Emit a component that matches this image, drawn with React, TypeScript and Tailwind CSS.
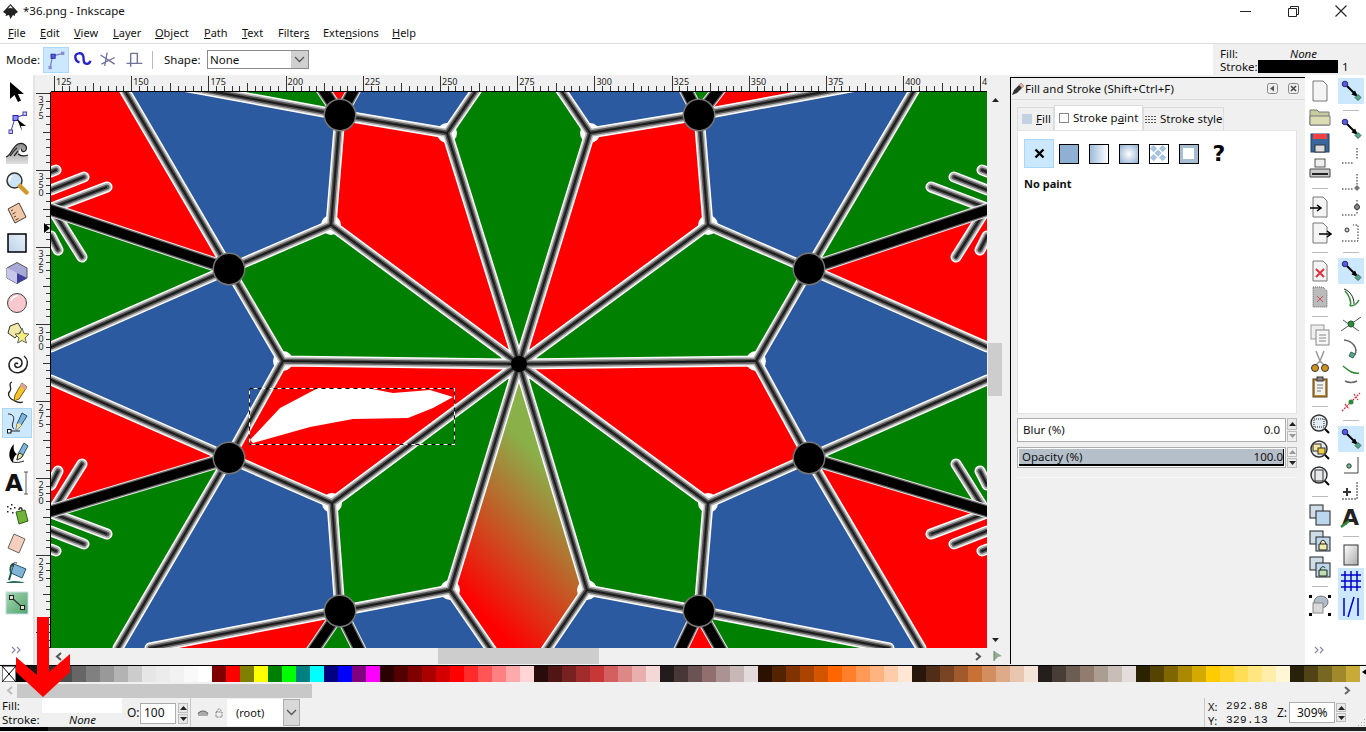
import type { ReactNode } from "react";

const A = "340 115", B = "699 115", C = "229 269", D = "809 269", E = "229 458", F = "809 458", G = "340 611", H = "699 611", O = "519 364";
const P = "331 225", Q = "447 133", R = "590 133", S = "708 225", T = "283 361", U = "756 361", W = "332 503", X = "450 590", Y = "587 590", Z = "708 503";

const RED = "#ff0000", GREEN = "#008000", BLUE = "#2c5aa0";

const regions: [string, string][] = [
  [RED, `51 92 125 92 ${C} 51 210`],
  [BLUE, `125 92 218 92 ${A} ${P} ${C}`],
  [GREEN, `218 92 322 92 ${A}`],
  [RED, `322 92 355 92 ${A}`],
  [BLUE, `355 92 ${A} ${Q} 480 92`],
  [GREEN, `480 92 555 92 ${R} ${O} ${Q}`],
  [BLUE, `555 92 ${R} ${B} 685 92`],
  [GREEN, `685 92 720 92 ${B}`],
  [RED, `720 92 821 92 ${B}`],
  [BLUE, `821 92 915 92 ${D} ${S} ${B}`],
  [GREEN, `915 92 987 92 987 210 ${D}`],
  [RED, `987 210 ${D} 987 347`],
  [BLUE, `987 347 ${D} ${U} ${F} 987 380`],
  [GREEN, `987 380 ${F} 987 515`],
  [RED, `987 515 ${F} 921 648 987 648`],
  [BLUE, `${F} ${Z} ${H} 889 648 921 648`],
  [GREEN, `${H} 889 648 725 648`],
  [RED, `725 648 680 648 ${H}`],
  [BLUE, `680 648 ${H} ${Y} 548 648`],
  [BLUE, `490 648 ${X} ${G} 360 648`],
  [GREEN, `360 648 ${G} 310 648`],
  [RED, `310 648 ${G} 150 648`],
  [BLUE, `118 648 150 648 ${G} ${W} ${E}`],
  [GREEN, `51 515 ${E} 118 648 51 648`],
  [RED, `51 380 ${E} 51 515`],
  [BLUE, `51 347 ${C} ${T} ${E} 51 380`],
  [GREEN, `51 210 ${C} 51 347`],
  [RED, `${A} ${Q} ${O} ${P}`],
  [RED, `${B} ${R} ${O} ${S}`],
  [GREEN, `${P} ${O} ${T} ${C}`],
  [GREEN, `${S} ${O} ${U} ${D}`],
  [RED, `${T} ${O} ${W} ${E}`],
  [RED, `${U} ${O} ${Z} ${F}`],
  [GREEN, `${W} ${O} ${X} ${G}`],
  [GREEN, `${Z} ${O} ${Y} ${H}`],
];

const thin = [
  `M118 79L${C}`, `M150 80L${A}`, `M${A}L${Q}L${O}`, `M${Q}L519 28`, `M${R}L519 28`, `M${B}L${R}L${O}`,
  `M889 80L${B}`, `M921 79L${D}`, `M${A}L${P}L${C}`, `M${P}L${O}`, `M${B}L${S}L${D}`, `M${S}L${O}`,
  `M51 347L${C}L${T}L${E}L51 380`, `M987 347L${D}L${U}L${F}L987 380`, `M${T}L${O}L${U}`,
  `M${E}L${W}L${G}`, `M${W}L${O}`, `M${F}L${Z}L${H}`, `M${Z}L${O}`, `M${G}L${X}L${O}`, `M${H}L${Y}L${O}`,
  `M${X}L519 690`, `M${Y}L519 690`, `M118 648L${E}`, `M150 648L${G}`, `M921 648L${F}`, `M889 648L${H}`,
  "M51 208L107 187", "M51 190L84 177", "M51 172L56 170", "M55 214L82 257", "M51 236L58 250",
  "M987 208L931 187", "M987 190L954 177", "M987 172L982 170", "M983 214L956 257", "M987 236L980 250",
  "M51 513L107 534", "M51 531L84 544", "M51 549L56 551", "M55 507L82 464", "M51 485L58 471",
  "M987 513L931 534", "M987 531L954 544", "M987 549L982 551", "M983 507L956 464", "M987 485L980 471",
].join("");

const thick = `M45 208L${C}M993 208L${D}M45 513L${E}M993 513L${F}M${A}L322 88M${A}L355 88M${B}L685 88M${B}L720 88M${G}L310 655M${G}L362 655M${H}L678 655M${H}L724 655`;

const hubs = [A, B, C, D, E, F, G, H].map((s) => s.split(" ").map(Number));
const joints = [P, Q, R, S, T, U, W, X, Y, Z].map((s) => s.split(" ").map(Number));

function Artwork() {
  return (
    <svg viewBox="51 92 936 556" className="block h-full w-full">
      <defs>
        <linearGradient id="kite" gradientUnits="userSpaceOnUse" x1="472" y1="604" x2="580" y2="500">
          <stop offset="0" stopColor="#ff0000" />
          <stop offset="1" stopColor="#8ab04a" />
        </linearGradient>
      </defs>
      <rect x="51" y="92" width="936" height="556" fill={GREEN} />
      {regions.map(([c, p], i) => (
        <polygon key={i} points={p} fill={c} />
      ))}
      <polygon points={`${O} ${X} 519 690 ${Y}`} fill="url(#kite)" />
      {joints.map(([x, y], i) => (
        <circle key={i} cx={x} cy={y} r="10" fill="#fff" />
      ))}
      <g fill="none" strokeLinecap="round" strokeLinejoin="round">
        <path d={thin} stroke="#fff" strokeWidth="11" />
        <path d={thin} stroke="#b5b5b5" strokeWidth="8" />
        <path d={thin} stroke="#555" strokeWidth="5" />
        <path d={thin} stroke="#1c1c1c" strokeWidth="2" strokeDasharray="3 1" />
        <path d={thick} stroke="#e8e8e8" strokeWidth="14" />
        <path d={thick} stroke="#666" strokeWidth="12" />
        <path d={thick} stroke="#000" strokeWidth="9.500" />
      </g>
      {hubs.map(([x, y], i) => (
        <g key={i}>
          <circle cx={x} cy={y} r="16.500" fill="#777" />
          <circle cx={x} cy={y} r="15" fill="#000" />
        </g>
      ))}
      <circle cx="519" cy="364" r="8" fill="#000" />
      <polygon points="250,440 280,408 318,388 367,388 393,393 430,390 453,397 433,408 408,418 353,419 310,427 253,443" fill="#fff" />
      <rect x="249.500" y="388.500" width="205" height="56" fill="none" stroke="#fff" strokeWidth="1" />
      <rect x="249.500" y="388.500" width="205" height="56" fill="none" stroke="#000" strokeWidth="1" strokeDasharray="4 4" />
    </svg>
  );
}

function TopRuler() {
  const ticks = Array.from({ length: 122 }, (_, i) => i);
  return (
    <svg width="936" height="17" className="block">
      <line x1="0" x2="936" y1="16.500" y2="16.500" stroke="#000" />
      {ticks.map((i) => {
        const x = Math.round(3 + i * 7.72) + 0.5;
        const top = i % 10 === 0 ? 1 : i % 5 === 0 ? 8 : 11;
        return <line key={i} x1={x} x2={x} y1={top} y2="16" stroke="#333" />;
      })}
      {ticks.filter((i) => i % 10 === 0 && i < 120).map((i) => (
        <text key={i} x={5 + i * 7.72} y="10" fontSize="9" fontFamily="'Noto Sans', sans-serif" fill="#222">
          {125 + (i / 10) * 25}
        </text>
      ))}
      <text x="931" y="10" fontSize="9" fontFamily="'Noto Sans', sans-serif" fill="#222">4</text>
    </svg>
  );
}

function LeftRuler() {
  const ticks = Array.from({ length: 73 }, (_, i) => i);
  return (
    <svg width="16" height="556" className="block">
      <line x1="15.500" x2="15.500" y1="0" y2="556" stroke="#000" />
      {ticks.map((i) => {
        const y = Math.round(1 + i * 7.7) + 0.5;
        const left = i % 10 === 0 ? 1 : i % 5 === 0 ? 8 : 11;
        return <line key={i} x1={left} x2="15" y1={y} y2={y} stroke="#333" />;
      })}
      {[0, 1, 2, 3, 4, 5, 6].map((k) => (
        <text key={k} fontSize="9" fontFamily="'Noto Sans', sans-serif" fill="#222" textAnchor="middle">
          {String(375 - k * 25).split("").map((d, j) => (
            <tspan key={j} x="6" y={11 + k * 77 + j * 8}>{d}</tspan>
          ))}
        </text>
      ))}
      <polygon points="9,131 15,136 9,141" fill="#000" />
    </svg>
  );
}

const I = ({ children, s = 24 }: { children: ReactNode; s?: number }) => (
  <svg width={s} height={s} viewBox="0 0 24 24" className="block">{children}</svg>
);

const SnapNodes = () => (
  <I>
    <path d="M6 5L17 16" stroke="#000" strokeWidth="2" />
    <path d="M16 11.500L19 18L12.500 15.500Z" fill="#000" />
    <circle cx="6" cy="5" r="2.800" fill="#5b5bd6" stroke="#2a2a8a" />
    <path d="M19 15.500L22 18.500L19 21.500L16 18.500Z" fill="#5aa58a" stroke="#2b6b55" />
  </I>
);

const toolIcons: ReactNode[] = [
  <I><path d="M5 1V18L9.500 14L13 21L16 19.500L13 13H19Z" fill="#000" /></I>,
  <I>
    <path d="M6 20L10 7L21 3" fill="none" stroke="#3a3ac0" strokeWidth="1" />
    <rect x="8" y="4.500" width="5" height="5" fill="#8b8bff" stroke="#2222aa" />
    <rect x="18" y="1" width="3.500" height="3.500" fill="#ccf" stroke="#4444aa" />
    <rect x="4" y="19" width="3.500" height="3.500" fill="#ccf" stroke="#4444aa" />
    <path d="M12 8L21 15L16 15L17 20Z" fill="#000" />
  </I>,
  <I>
    <defs><linearGradient id="wv" x1="0" y1="0" x2="0" y2="1"><stop offset="0" stopColor="#8a8a8a" /><stop offset="1" stopColor="#e0e0e0" /></linearGradient></defs>
    <path d="M1 23V16C6 15 7 6 13 3C18 1 23 5 21 9C19 12 15 10 17 8C14 8 13 11 15 13C17 15 20 15 23 14V23Z" fill="url(#wv)" />
    <path d="M1 16C6 15 7 6 13 3C18 1 23 5 21 9C19 12 15 10 17 8M5 15C8 12 9 9 12 7M9 15C11 13 12 11 13 10M13 13C16 16 20 15 23 14" fill="none" stroke="#222" strokeWidth="1.200" />
  </I>,
  <I>
    <circle cx="9.500" cy="9.500" r="7.500" fill="#cfe3f7" stroke="#333" strokeWidth="1.500" />
    <path d="M7 5C5 6 4.500 8 5 10" stroke="#fff" fill="none" strokeWidth="1.500" />
    <path d="M15 15L21.500 21.500" stroke="#d09a2a" strokeWidth="4.500" strokeLinecap="round" />
  </I>,
  <I>
    <path d="M3 8L14 2L21 16L10 22Z" fill="#f2c9a8" stroke="#4a3a30" />
    <path d="M6 10L8 8.800M7.500 13L10.500 11.500M9 16L11 15M10.500 19L13.500 17.500" stroke="#4a3a30" strokeWidth="1" />
  </I>,
  <I>
    <defs><linearGradient id="rg" x1="0" y1="1" x2="1" y2="0"><stop offset="0" stopColor="#bcd3ea" /><stop offset="1" stopColor="#e9f0f7" /></linearGradient></defs>
    <rect x="3" y="3" width="18" height="18" fill="url(#rg)" stroke="#000" strokeWidth="1.500" />
  </I>,
  <I>
    <path d="M12 1.500L22 7V17L12 22.500L2 17V7Z" fill="#a9a9d8" stroke="#555" />
    <path d="M12 12L22 17L12 22.500L2 17Z" fill="#3e3e9c" />
    <path d="M2 7L12 12V22.500L2 17Z" fill="#c7c7e8" />
  </I>,
  <I><circle cx="12" cy="12" r="9.500" fill="#f9c8ce" stroke="#444" strokeWidth="1" /><path d="M6 10C7 6 10 5 13 4.500" stroke="#fff" strokeWidth="1.500" fill="none" /></I>,
  <I>
    <path d="M5 5L13 2L17 9L10 17L3 12Z" fill="#f2e9a8" stroke="#333" />
    <path d="M17 7L19 12.500L24 13L20 17L21.500 22L17 19.500L12.500 22L14 17L10 13L15 12.500Z" fill="#f4ee7a" stroke="#666" />
  </I>,
  <I><path d="M13 13C11 11 9 13 10 15C12 18 17 16 17 12C17 7 11 5 7 8C3 11 3 17 7 20C11 23 18 22 21 17C23 13 23 8 19 5" fill="none" stroke="#222" strokeWidth="1.500" /></I>,
  <I>
    <path d="M7 1C2 3 8 7 5 10C2 13 4 17 8 19C11 21 15 22 18 21" fill="none" stroke="#222" strokeWidth="1.300" />
    <path d="M17 2L22 6L14 18L9 20L10 14Z" fill="#f4c430" stroke="#7a5a10" />
    <path d="M17 2L22 6L20 9L15 5Z" fill="#d9a5a0" />
  </I>,
  <I>
    <path d="M3 3C8 3 10 6 8 11C7 14 7 16 9 18" fill="none" stroke="#222" />
    <path d="M6 20H15" stroke="#222" />
    <rect x="2.500" y="18.500" width="3.500" height="3.500" fill="#fff" stroke="#111" />
    <path d="M17 2L22 5L15 16L11 19L12 13Z" fill="#7fb4d8" stroke="#27506e" />
    <path d="M14 12L16.500 14L15 16L11 19L12 13Z" fill="#f2e3a0" />
  </I>,
  <I>
    <path d="M9 3C4 8 2 16 8 22C8 18 9 15 12 13C9 12 8 7 9 3Z" fill="#000" />
    <path d="M19 2L23 5L17 16L12 19L13 13Z" fill="#7fb4d8" stroke="#27506e" />
    <path d="M15 12L18 14L16 17L12 19L13 14Z" fill="#f2e3a0" stroke="#333" />
    <path d="M8 21C12 22 16 21 19 20" stroke="#222" fill="none" />
  </I>,
  <I>
    <text x="0" y="20" fontSize="23" fontWeight="700" fontFamily="'DejaVu Sans', sans-serif" fill="#111">A</text>
    <path d="M19 1H23M19 23H23M21 1V23" stroke="#333" fill="none" strokeWidth="0.800" />
  </I>,
  <I>
    <path d="M11 11L20 9L23 20L14 23Z" fill="#6fb33a" stroke="#2f5f14" />
    <path d="M14 9C14 6 17 6 17 9" fill="none" stroke="#333" strokeWidth="1.500" />
    <path d="M2 5h1.500v1.500H2zM6 3h1.500v1.500H6zM5 7h1.500v1.500H5zM9 6h1.500v1.500H9zM2 10h1.500v1.500H2zM7 11h1.500v1.500H7z" fill="#222" />
  </I>,
  <I><path d="M9 3L20 8L14 22L3 17Z" fill="#f6cfc0" stroke="#665" /></I>,
  <I>
    <path d="M9 3L21 8L17 17L6 12Z" fill="#7fb4d8" stroke="#27506e" />
    <path d="M9 3C5 3 5 9 6 12L4 19" fill="none" stroke="#1f5a4a" strokeWidth="2" />
    <path d="M1 22C6 19 16 20 20 22Z" fill="#2c6d5e" />
    <path d="M12 2C8 1 7 3 8 6" fill="none" stroke="#333" />
  </I>,
  <I>
    <defs><linearGradient id="gr" x1="0" y1="0" x2="1" y2="1"><stop offset="0" stopColor="#a8d8b4" /><stop offset="1" stopColor="#4fa36a" /></linearGradient></defs>
    <rect x="1" y="1" width="22" height="22" fill="url(#gr)" stroke="#cde" />
    <path d="M7 7L17 16" stroke="#333" strokeWidth="1.300" />
    <rect x="4.500" y="4.500" width="4" height="4" fill="#ddd" stroke="#222" />
    <rect x="15.500" y="14.500" width="4" height="4" fill="#ddd" stroke="#222" />
  </I>,
];

const Page = ({ children }: { children?: ReactNode }) => (
  <I s={24}>
    <path d="M5 2H15L19 6V22H5Z" fill="#f4f4f4" stroke="#777" />
    {children}
  </I>
);

const Lens = ({ children }: { children?: ReactNode }) => (
  <I>
    <circle cx="11" cy="10" r="8" fill="#e6eef4" stroke="#333" strokeWidth="1.500" />
    {children}
    <path d="M17 16L21 20" stroke="#000" strokeWidth="2" />
  </I>
);

const Stack = ({ children }: { children?: ReactNode }) => (
  <I>
    <rect x="2" y="2" width="13" height="13" fill="#cfdde8" stroke="#222" />
    <rect x="8" y="8" width="14" height="14" fill="#bcd6ee" stroke="#222" />
    {children}
  </I>
);

const commandIcons: ("sep" | ReactNode)[] = [
  <Page />,
  <I><path d="M2 5H9L11 7H21V20H2Z" fill="#c8cba0" stroke="#777" /><path d="M2 11H22V20H2Z" fill="#dcdcb5" stroke="#777" /></I>,
  <I><rect x="3" y="3" width="18" height="18" fill="#39679c" stroke="#20406a" /><rect x="5" y="3" width="14" height="5" fill="#f04040" /><rect x="7" y="14" width="10" height="7" fill="#ddd" stroke="#333" /></I>,
  <I><rect x="7" y="2" width="10" height="8" fill="#eee" stroke="#555" /><path d="M2 12H22V20H2Z" fill="#ccc" stroke="#444" /><path d="M4 17H20" stroke="#222" strokeWidth="2" /></I>,
  "sep",
  <Page><path d="M2 13H12M9 10L13 13L9 16" stroke="#000" fill="none" strokeWidth="1.500" /></Page>,
  <Page><path d="M11 13H22M19 10L23 13L19 16" stroke="#000" fill="none" strokeWidth="1.500" /></Page>,
  "sep",
  <Page><path d="M8 10L16 18M16 10L8 18" stroke="#e03040" strokeWidth="2" /></Page>,
  <I><path d="M5 2H15L19 6V22H5Z" fill="#bbb" stroke="#666" strokeDasharray="1 1" /><path d="M9 11L15 17M15 11L9 17" stroke="#c9505e" /></I>,
  "sep",
  <I><rect x="3" y="2" width="13" height="14" fill="#eee" stroke="#999" /><rect x="8" y="7" width="13" height="15" fill="#f7f7f7" stroke="#888" /><path d="M11 12H18M11 15H18M11 18H18" stroke="#888" /></I>,
  <I><path d="M8 2L12 12L16 2M12 12L6 18M12 12L18 18" stroke="#999" fill="none" strokeWidth="1.500" /><circle cx="7" cy="19" r="3.500" fill="#d0941e" stroke="#333" /><circle cx="17" cy="19" r="3.500" fill="#d0941e" stroke="#333" /></I>,
  <I><rect x="5" y="4" width="14" height="18" fill="#b88a3c" stroke="#5a3f14" /><rect x="7" y="6" width="10" height="14" fill="#f2f2f2" /><rect x="9" y="2" width="6" height="4" fill="#888" stroke="#333" /><path d="M9 10H15M9 13H15M9 16H13" stroke="#777" /></I>,
  "sep",
  <Lens><rect x="6" y="6" width="10" height="8" fill="none" stroke="#222" strokeDasharray="1 1" /></Lens>,
  <Lens><rect x="5" y="5" width="8" height="7" fill="#f3e6a0" stroke="#333" /><rect x="10" y="9" width="7" height="6" fill="#f0d040" stroke="#333" /></Lens>,
  <Lens><rect x="7" y="5" width="8" height="11" fill="#e8e8e8" stroke="#333" /></Lens>,
  "sep",
  <Stack />,
  <Stack><path d="M11 15H19V21H11ZM12.500 15C12.500 10 17.500 10 17.500 15" fill="#f2e8a8" stroke="#222" /></Stack>,
  <Stack><path d="M11 15H19V21H11ZM12.500 15C12.500 11 16.500 11 17 13" fill="#bde0b0" stroke="#222" /></Stack>,
  "sep",
  <I>
    <ellipse cx="13" cy="9" rx="7" ry="6" fill="#aebdc9" stroke="#777" />
    <rect x="5" y="10" width="10" height="10" fill="#d9d9d9" stroke="#888" />
    <path d="M1 2h3v3h-3zM20 2h3v3h-3zM1 20h3v3h-3zM20 20h3v3h-3z" fill="#000" />
  </I>,
];

const Dots = () => <path d="M3 20H14M18 5V16" stroke="#666" strokeWidth="1.500" strokeDasharray="1.500 1.500" fill="none" />;

const snapIcons: ("sep" | { on?: boolean; icon: ReactNode })[] = [
  { on: true, icon: <SnapNodes /> },
  "sep",
  { icon: <SnapNodes /> },
  { icon: <I><Dots /></I> },
  { icon: <I><Dots /><path d="M18 16L21 19L18 22L15 19Z" fill="#777" /></I> },
  { icon: <I><path d="M3 20H18M18 5V20" stroke="#222" strokeDasharray="1.500 1.500" fill="none" /><circle cx="18" cy="12" r="2.500" fill="#888" stroke="#333" /></I> },
  { icon: <I><path d="M3 20H19V4H14" stroke="#222" strokeDasharray="1.500 1.500" fill="none" /><circle cx="8" cy="9" r="2" fill="#ccc" stroke="#333" /></I> },
  "sep",
  { on: true, icon: <SnapNodes /> },
  { icon: <I><path d="M6 6C10 10 13 17 11 21M20 15C18 19 14 21 11 21" fill="none" stroke="#2f8a3a" strokeWidth="1.500" /><path d="M5 4C11 6 15 12 15 19" fill="none" stroke="#222" /></I> },
  { icon: <I><path d="M2 20L22 6M4 9L20 20" stroke="#555" fill="none" /><circle cx="12" cy="13" r="3" fill="#2f8a3a" stroke="#1a5a28" /></I> },
  { icon: <I><path d="M5 3C14 4 19 11 16 18" fill="none" stroke="#666" strokeWidth="1.500" /><path d="M12 15L16 17L14 21L10 19Z" fill="#5aa58a" stroke="#2b6b55" /></I> },
  { icon: <I><path d="M4 3C10 8 14 11 20 10" fill="none" stroke="#2f8a3a" strokeWidth="1.500" /><path d="M6 18C10 20 14 20 18 18" fill="none" stroke="#666" strokeWidth="1.500" /></I> },
  { icon: <I><path d="M3 22L21 4M6 15L10 20M15 5L19 11" stroke="#d0303a" strokeWidth="1.300" fill="none" strokeDasharray="2 1" /><circle cx="12" cy="13" r="2.500" fill="#2f8a3a" /></I> },
  "sep",
  { on: true, icon: <SnapNodes /> },
  { icon: <I><path d="M19 4V20H5" stroke="#444" fill="none" /><circle cx="10" cy="13" r="2.200" fill="#6cc090" stroke="#333" /></I> },
  { icon: <I><path d="M8 9V17M4 13H12" stroke="#333" strokeWidth="2" /><path d="M18 3V20H3" stroke="#333" strokeDasharray="2 1" fill="none" /></I> },
  { icon: <I><text x="3" y="20" fontSize="22" fontWeight="700" fontFamily="'DejaVu Sans', sans-serif" fill="#222">A</text><path d="M2 22L10 16" stroke="#2f8a3a" strokeWidth="2.500" /></I> },
  "sep",
  { icon: <I><defs><linearGradient id="pg" x1="0" y1="0" x2="1" y2="1"><stop offset="0" stopColor="#fff" /><stop offset="1" stopColor="#aaa" /></linearGradient></defs><rect x="5" y="2" width="14" height="20" fill="url(#pg)" stroke="#333" /></I> },
  { on: true, icon: <I><path d="M6 2V22M12 2V22M18 2V22M2 6H22M2 12H22M2 18H22" stroke="#0000cc" strokeWidth="1.500" /></I> },
  { on: true, icon: <I><path d="M5 3V21M19 3V21M9 22L15 2" stroke="#0000cc" strokeWidth="1.500" /></I> },
];

const Chevrons = () => (
  <svg width="12" height="8" viewBox="0 0 12 8" className="block">
    <path d="M1 1L4 4L1 7M6 1L9 4L6 7" fill="none" stroke="#8a8aa8" strokeWidth="1.200" />
  </svg>
);

const Tri = ({ up, dim }: { up?: boolean; dim?: boolean }) => (
  <svg width="7" height="4" viewBox="0 0 7 4" className="block">
    <path d={up ? "M0 4L3.500 0L7 4Z" : "M0 0L3.500 4L7 0Z"} fill={dim ? "#999" : "#222"} />
  </svg>
);

const Spin = ({ h = "h-[21px]", dimUp, dimDown }: { h?: string; dimUp?: boolean; dimDown?: boolean }) => (
  <div className={`flex w-[10px] flex-col gap-px ${h}`}>
    <div className={`flex flex-1 items-center justify-center border border-[#bdbdbd] ${dimUp ? "bg-[#f0f0f0]" : "bg-[#e8e8e8]"}`}><Tri up dim={dimUp} /></div>
    <div className={`flex flex-1 items-center justify-center border border-[#bdbdbd] ${dimDown ? "bg-[#f0f0f0]" : "bg-[#e8e8e8]"}`}><Tri dim={dimDown} /></div>
  </div>
);

const ChevDown = () => (
  <svg width="11" height="7" viewBox="0 0 11 7"><path d="M1 1L5.500 5.500L10 1" fill="none" stroke="#555" strokeWidth="1.300" /></svg>
);

const menus: [string, string, string, string][] = [
  ["", "F", "ile", "w-[32px]"], ["", "E", "dit", "w-[34px]"], ["", "V", "iew", "w-[39px]"], ["", "L", "ayer", "w-[42px]"], ["", "O", "bject", "w-[49px]"],
  ["", "P", "ath", "w-[38px]"], ["", "T", "ext", "w-[36px]"], ["Filter", "s", "", "w-[45px]"], ["Exte", "n", "sions", "w-[69px]"], ["", "H", "elp", "w-[30px]"],
];

const grays = ["#000000", "#1a1a1a", "#333333", "#4d4d4d", "#666666", "#808080", "#999999", "#b3b3b3", "#cccccc", "#e6e6e6", "#ececec", "#f2f2f2", "#f9f9f9", "#ffffff"];
const swatches = [
  ...grays,
  "#800000", "#ff0000", "#808000", "#ffff00", "#008000", "#00ff00", "#008080", "#00ffff", "#000080", "#0000ff", "#800080", "#ff00ff",
  "#2b0000", "#550000", "#800000", "#aa0000", "#d40000", "#ff0000", "#ff2a2a", "#ff5555", "#ff8080", "#ffaaaa", "#ffd5d5",
  "#280b0b", "#501616", "#782121", "#a02c2c", "#c83737", "#d35f5f", "#de8787", "#e9afaf", "#f4d7d7",
  "#241c1c", "#483737", "#6c5353", "#916f6f", "#ac9393", "#c8b7b7", "#e3dbdb",
  "#2b1100", "#552200", "#803300", "#aa4400", "#d45500", "#ff6600", "#ff7f2a", "#ff9955", "#ffb380", "#ffccaa", "#ffe6d5",
  "#28170b", "#502d16", "#784421", "#a05a2c", "#c87137", "#d38d5f", "#deaa87", "#e9c6af", "#f4e3d7",
  "#241f1c", "#483e37", "#6c5d53", "#917c6f", "#ac9d93", "#c8beb7", "#e3dedb",
  "#2b2200", "#554400", "#806600", "#aa8800", "#d4aa00", "#ffcc00", "#ffd42a", "#ffdd55", "#ffe680", "#ffeeaa", "#fff6d5",
  "#28220b", "#504416", "#786721", "#a0892c", "#c8ab37",
];

function PaintButtons() {
  const sq = "h-[20px] w-[20px] border border-black";
  return (
    <div className="flex pl-[6px] pt-2">
      <div className="flex h-[29px] w-[30px] items-center justify-center border border-[#a8d8fb] bg-[#cce8ff]">
        <svg width="11" height="11" viewBox="0 0 11 11"><path d="M1.500 1.500L9.500 9.500M9.500 1.500L1.500 9.500" stroke="#000" strokeWidth="2.400" /></svg>
      </div>
      <div className="flex h-[29px] w-[30px] items-center justify-center"><div className={`${sq} bg-[#8fb0d3]`} /></div>
      <div className="flex h-[29px] w-[30px] items-center justify-center"><div className={`${sq} bg-gradient-to-r from-[#9dbbdb] to-white`} /></div>
      <div className="flex h-[29px] w-[30px] items-center justify-center"><div className={`${sq} bg-[radial-gradient(circle,#ffffff,#8fb0d3)]`} /></div>
      <div className="flex h-[29px] w-[30px] items-center justify-center">
        <svg width="20" height="20" viewBox="0 0 20 20" className="border border-black bg-white">
          <path d="M4 0L8 4L4 8L0 4ZM14 0L18 4L14 8L10 4ZM9 5L13 9L9 13L5 9ZM4 10L8 14L4 18L0 14ZM14 10L18 14L14 18L10 14Z" fill="#a7c3e0" />
        </svg>
      </div>
      <div className="flex h-[29px] w-[30px] items-center justify-center">
        <div className={`${sq} flex items-center justify-center bg-[#a7bdd4] p-[3px] pb-[4px] pr-[4px]`}><div className="h-full w-full bg-white" /></div>
      </div>
      <div className="flex h-[29px] w-[30px] items-center justify-center font-['DejaVu_Sans'] text-[22px] font-bold leading-none text-black">?</div>
    </div>
  );
}

function DockPanel() {
  return (
    <div className="mt-[2px] flex h-[587px] w-[295px] flex-col border-l border-t border-black text-[11.500px]">
      <div className="flex h-[22px] items-center border-b border-[#dcdcdc] pr-[6px]">
        <svg width="14" height="14" viewBox="0 0 14 14" className="shrink-0"><path d="M1 13L3 8L10 1L13 4L6 11Z" fill="#333" /><path d="M10 1L13 4L11 6L8 3Z" fill="#e0b0a0" /></svg>
        <span>Fill and Stroke (Shift+Ctrl+F)</span>
        <svg width="11" height="11" viewBox="0 0 11 11" className="ml-auto"><rect x="0.500" y="0.500" width="10" height="10" rx="2" fill="#eee" stroke="#888" /><path d="M7 2.500V8.500L3 5.500Z" fill="#555" /></svg>
        <svg width="11" height="11" viewBox="0 0 11 11" className="ml-[10px]"><rect x="0.500" y="0.500" width="10" height="10" rx="2" fill="#eee" stroke="#888" /><path d="M3 3L8 8M8 3L3 8" stroke="#444" strokeWidth="1.500" /></svg>
      </div>
      <div className="flex flex-col pl-[6px]">
        <div className="mt-[5px] flex h-[25px] items-end whitespace-nowrap">
          <div className="flex h-[23px] w-[37px] items-center gap-[4px] border border-b-0 border-[#dcdcdc] pl-[4px]">
            <span className="h-[10px] w-[10px] shrink-0 bg-[#c2d2e2]" />
            <span><u>F</u>ill</span>
          </div>
          <div className="flex h-[25px] w-[89px] items-center gap-[4px] border border-b-0 border-[#dcdcdc] bg-white pl-[4px]">
            <span className="h-[10px] w-[10px] shrink-0 border border-[#888] bg-white" />
            <span>Stroke p<u>a</u>int</span>
          </div>
          <div className="flex h-[23px] w-[81px] items-center gap-[4px] border border-b-0 border-[#dcdcdc] pl-[1px]">
            <svg width="11" height="9" viewBox="0 0 11 9" className="shrink-0"><path d="M0 1.500H11M0 4.500H11M0 7.500H11" stroke="#555" strokeDasharray="2 1" /></svg>
            <span>Stroke style</span>
          </div>
        </div>
        <div className="h-[284px] w-[280px] border border-[#e2e2e2] bg-white">
          <PaintButtons />
          <div className="mt-[8px] pl-[6px] text-[11px] font-bold leading-4">No paint</div>
        </div>
        <div className="mt-1 flex h-[24px] w-[280px] gap-px">
          <div className="flex w-[269px] items-center justify-between border border-[#adadad] bg-white px-[5px]">
            <span>Blur (%)</span><span>0.0</span>
          </div>
          <Spin h="h-[24px]" dimDown />
        </div>
        <div className="mt-[5px] flex h-[21px] w-[280px] gap-px">
          <div className="w-[269px] border border-[#adadad] bg-white p-px">
            <div className="flex h-full items-center justify-between border-b-2 border-r border-black bg-[#b5bfca] pl-[3px]">
              <span>Opacity (%)</span><span>100.0</span>
            </div>
          </div>
          <Spin dimUp />
        </div>
        <div className="mt-[9px] w-[280px] border-t border-[#f8f8f8]" />
      </div>
    </div>
  );
}

function StatusBar() {
  return (
    <div className="flex h-[29px] text-[11px] leading-none">
      <div className="relative w-[125px] shrink-0 pl-[2px] text-[11.500px]">
        <div className="flex h-[15px] items-center">
          <span className="w-[40px]">Fill:</span>
          <span className="h-[15px] w-[80px] bg-white" />
        </div>
        <div className="flex h-[14px] items-center">
          <span className="w-[67px]">Stroke:</span>
          <span className="italic">None</span>
        </div>
      </div>
      <div className="flex w-[65px] shrink-0 items-center gap-[2px] pl-[2px] pt-[1px] text-[12px]">
        <span className="w-[11px]">O:</span>
        <div className="flex h-[21px] w-[36px] items-center border border-[#adadad] bg-white pl-[3px]">100</div>
        <Spin h="h-[21px]" />
      </div>
      <div className="flex items-center border-l border-[#c8c8c8] pl-[6px]">
        <svg width="12" height="10" viewBox="0 0 12 10" className="mr-[5px]"><path d="M1 6C3 2 9 2 11 6M2 4V8M4 3V8M6 3V8M8 3V8M10 4V8" stroke="#666" fill="none" /></svg>
        <svg width="10" height="11" viewBox="0 0 10 11" className="mr-[2px]"><path d="M2 5H8V10H2ZM3 5C3 1 7 1 7 4" stroke="#777" fill="none" strokeDasharray="1 0.500" /></svg>
        <div className="ml-[1px] flex h-[27px] w-[56px] items-center bg-white pl-[9px]">(root)</div>
        <div className="flex h-[27px] w-[17px] items-center justify-center border border-[#adadad] bg-[#d8d8d8]"><ChevDown /></div>
      </div>
      <div className="ml-auto flex items-stretch pr-[20px]">
        <div className="flex flex-col justify-center gap-[3px] border-l border-[#c8c8c8] pl-[3px] pt-[1px]">
          <div className="flex">
            <span className="w-[18px] text-[11px]">X:</span>
            <span className="font-['Liberation_Mono'] text-[11px] tracking-[0.4px]">292.88</span>
          </div>
          <div className="flex">
            <span className="w-[18px] text-[11px]">Y:</span>
            <span className="font-['Liberation_Mono'] text-[11px] tracking-[0.4px]">329.13</span>
          </div>
        </div>
        <div className="ml-[9px] flex items-center gap-px text-[12px]">
          <span className="w-[11px]">Z:</span>
          <div className="flex h-[21px] w-[46px] items-center border border-[#adadad] bg-white pl-[7px]">309%</div>
          <Spin h="h-[19px]" />
        </div>
      </div>
      <svg width="10" height="10" viewBox="0 0 10 10" className="absolute bottom-[4px] right-0"><path d="M8 1h1v1H8zM8 4h1v1H8zM5 4h1v1H5zM8 7h1v1H8zM5 7h1v1H5zM2 7h1v1H2z" fill="#aaa" /></svg>
    </div>
  );
}

export default function App() {
  return (
    <div className="relative flex h-[732px] w-[1366px] flex-col overflow-hidden bg-[#f0f0f0] font-['Noto_Sans',sans-serif] text-[11.500px] text-[#111]">
      {/* title bar */}
      <div className="flex h-[22px] items-center bg-white">
        <svg width="17" height="17" viewBox="0 0 17 17" className="ml-[2px] mr-[4px] shrink-0">
          <path d="M8.500 1L1 9L4 11L3.500 13L7 12L8.500 16L11 12L13 13L13 11L16 9Z" fill="#222" />
          <path d="M8.500 2.500L6 5.500L8.500 5L11 5.500Z" fill="#eee" />
        </svg>
        <span className="text-[11.500px]">*36.png - Inkscape</span>
        <div className="ml-auto flex h-full items-center">
          <div className="flex w-[50px] justify-center"><svg width="11" height="11" viewBox="0 0 11 11"><path d="M0 5.500H11" stroke="#222" /></svg></div>
          <div className="flex w-[46px] justify-center"><svg width="11" height="11" viewBox="0 0 11 11"><path d="M0.500 2.500H8.500V10.500H0.500ZM2.500 2.500V0.500H10.500V8.500H8.500" fill="none" stroke="#222" /></svg></div>
          <div className="flex w-[50px] justify-center"><svg width="12" height="12" viewBox="0 0 12 12"><path d="M0.500 0.500L11.500 11.500M11.500 0.500L0.500 11.500" stroke="#222" strokeWidth="1.100" /></svg></div>
        </div>
      </div>
      {/* menu */}
      <div className="flex h-[22px] items-center border-b border-[#dedede] bg-white pb-px pl-2 pt-[2px] text-[11px]">
        {menus.map(([a, u, b, w]) => (
          <span key={a + u + b} className={w}>{a}<u>{u}</u>{b}</span>
        ))}
      </div>
      {/* tool options */}
      <div className="flex h-[31px] items-center bg-white">
        <span className="ml-[6px] w-[37px]">Mode:</span>
        <div className="flex h-[26px] w-[26px] items-center justify-center border border-[#a8d8fb] bg-[#cce8ff]">
          <I s={20}>
            <path d="M5 21L8 7L21 4" fill="none" stroke="#7a8ac0" strokeWidth="1.500" />
            <rect x="6" y="5" width="5" height="5" fill="#5a5ae0" stroke="#22229a" />
            <rect x="18" y="2" width="4" height="4" fill="#8a8ad8" />
            <rect x="3" y="19" width="4" height="4" fill="#8a8ad8" />
          </I>
        </div>
        <div className="flex w-[26px] justify-center"><I s={20}><path d="M9 15C3 13 2 5 8 4C14 3 14 9 14 12C14 18 21 18 22 13" fill="none" stroke="#2323c8" strokeWidth="2.800" /></I></div>
        <div className="flex w-[26px] justify-center"><I s={20}><path d="M3 6L20 17M8 19L11 3M4 17L20 9" stroke="#6f7398" strokeWidth="1.600" fill="none" /></I></div>
        <div className="flex w-[26px] justify-center"><I s={20}><path d="M3 16H22M8 4H16V16M8 4V20" stroke="#6f7398" strokeWidth="1.700" fill="none" /></I></div>
        <span className="ml-[5px] h-[18px] border-l border-[#bbb]" />
        <span className="ml-[11px] w-[43px]">Shape:</span>
        <div className="flex h-[19px] w-[102px] items-stretch border border-[#8a8a8a]">
          <span className="flex flex-1 items-center bg-white pl-[2px]">None</span>
          <span className="flex w-[17px] items-center justify-center bg-[#d0d0d0]"><ChevDown /></span>
        </div>
        <div className="ml-auto h-full w-[153px] bg-[#f0f0f0] pl-[7px] pt-[3px] leading-[13px]">
          <div className="flex"><span className="w-[70px]">Fill:</span><span className="italic">None</span></div>
          <div className="flex items-center"><span className="w-[38px]">Stroke:</span><span className="h-[13px] w-[80px] bg-black" /><span className="ml-[4px]">1</span></div>
        </div>
      </div>
      {/* main */}
      <div className="flex h-[589px]">
        <div className="flex w-[33px] shrink-0 flex-col items-center bg-white pt-[3px]">
          {toolIcons.map((icon, i) => (
            <div key={i} className={`flex h-[30px] w-[30px] items-center justify-center ${i === 11 ? "border border-[#a8d8fb] bg-[#cce8ff]" : ""}`}>
              {icon}
            </div>
          ))}
          <div className="mt-[28px]"><Chevrons /></div>
        </div>
        <div className="w-[2px] shrink-0 bg-[#e4e4e4]" />
        <div className="flex w-[968px] shrink-0 flex-col">
          <div className="ml-[16px] h-[17px]"><TopRuler /></div>
          <div className="flex h-[556px]">
            <div className="w-[16px] shrink-0"><LeftRuler /></div>
            <div className="h-[556px] w-[936px] shrink-0"><Artwork /></div>
            <div className="flex w-[16px] shrink-0 flex-col items-center">
              <div className="mt-[6px]"><Tri up /></div>
              <div className="mt-[241px] h-[53px] w-[14px] bg-[#cdcdcd]" />
              <div className="mt-[242px]"><Tri /></div>
            </div>
          </div>
          <div className="flex h-[16px] items-center pl-[20px]">
            <svg width="7" height="9" viewBox="0 0 7 9"><path d="M6 1L2 4.500L6 8" fill="none" stroke="#555" strokeWidth="2" /></svg>
            <div className="ml-[376px] h-[16px] w-[161px] bg-[#cdcdcd]" />
            <svg width="7" height="9" viewBox="0 0 7 9" className="ml-[376px]"><path d="M1 1L5 4.500L1 8" fill="none" stroke="#555" strokeWidth="2" /></svg>
            <svg width="10" height="10" viewBox="0 0 10 10" className="ml-[11px]"><path d="M1 0L9 5L5 6L1 10Z" fill="#8db08d" /><path d="M1 0V10" stroke="#777" /></svg>
          </div>
        </div>
        <div className="w-[7px] shrink-0" />
        <DockPanel />
        <div className="flex w-[30px] shrink-0 flex-col items-center bg-white pt-[3px]">
          {commandIcons.map((icon, i) =>
            icon === "sep" ? (
              <div key={i} className="flex h-[12px] items-center"><span className="w-[16px] border-t border-[#bbb]" /></div>
            ) : (
              <div key={i} className="flex h-[26px] items-center justify-center">{icon}</div>
            ),
          )}
          <div className="mt-[28px]"><Chevrons /></div>
        </div>
        <div className="flex w-[31px] shrink-0 flex-col items-center bg-white pt-[3px]">
          {snapIcons.map((it, i) =>
            it === "sep" ? (
              <div key={i} className="flex h-[12px] items-center"><span className="w-[16px] border-t border-[#bbb]" /></div>
            ) : (
              <div key={i} className={`flex h-[26px] w-[26px] items-center justify-center ${it.on ? "bg-[#cce8ff]" : ""}`}>{it.icon}</div>
            ),
          )}
        </div>
      </div>
      {/* palette */}
      <div className="mt-px flex h-[18px] overflow-hidden border-t border-black pl-[2px]">
        <svg width="14" height="16" viewBox="0 0 14 16" className="shrink-0 bg-white"><path d="M0 0H14V16H0ZM0 0L14 16M14 0L0 16" fill="none" stroke="#000" /></svg>
        {swatches.map((c, i) => (
          <span key={i} className="h-[16px] w-[14px] shrink-0" style={{ backgroundColor: c }} />
        ))}
        <svg width="8" height="10" viewBox="0 0 8 10" className="ml-[2px] mt-[1px] shrink-0"><path d="M7 0V10L0 5Z" fill="#000" /></svg>
      </div>
      {/* lower scrollbar */}
      <div className="flex h-[15px] items-center pl-[6px]">
        <svg width="7" height="9" viewBox="0 0 7 9"><path d="M6 1L2 4.500L6 8" fill="none" stroke="#bbb" strokeWidth="2" /></svg>
        <div className="ml-[4px] h-[14px] w-[295px] bg-[#c8c8c8]" />
        <svg width="7" height="9" viewBox="0 0 7 9" className="ml-auto mr-[15px]"><path d="M1 1L5 4.500L1 8" fill="none" stroke="#666" strokeWidth="2" /></svg>
      </div>
      <StatusBar />
      <div className="flex h-[4px]">
        <div className="w-[48px] bg-black" />
        <div className="flex-1 bg-[#222222]" />
      </div>
      {/* annotation arrow over the status area */}
      <svg width="54" height="81" viewBox="0 0 54 81" className="absolute left-[16px] top-[617px]">
        <polygon points="21,0 33,0 33,55 54,37 54,55 27,80 0,55 0,40 21,58" fill="#ff0000" />
      </svg>
    </div>
  );
}
